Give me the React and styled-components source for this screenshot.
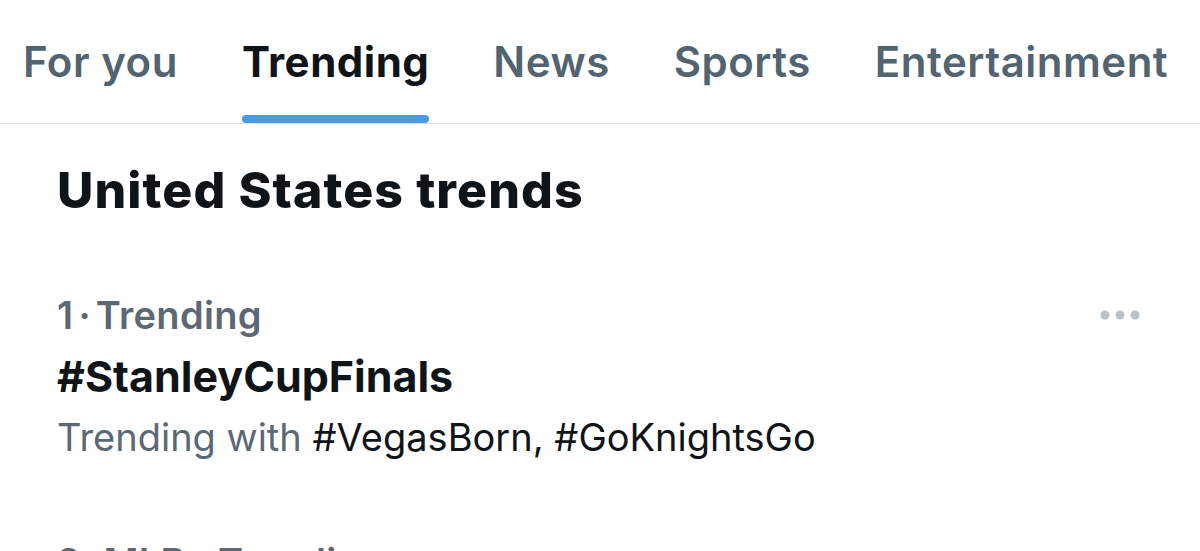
import React from 'react';
import styled, { createGlobalStyle } from 'styled-components';

const GlobalStyle = createGlobalStyle`
  html, body {
    margin: 0;
    padding: 0;
    background: #ffffff;
  }
  body {
    font-family: Inter, "Noto Sans", sans-serif;
    -webkit-font-smoothing: antialiased;
  }
`;

const tabs = ['For you', 'Trending', 'News', 'Sports', 'Entertainment'];

const trends = [
  {
    rank: 1,
    context: 'Trending',
    name: '#StanleyCupFinals',
    with: ['#VegasBorn', '#GoKnightsGo'],
  },
  {
    rank: 2,
    context: 'MLB · Trending',
    name: '#Yankees',
    with: [],
  },
];

function MoreIcon() {
  return (
    <svg width='40' height='10' viewBox='0 0 40 10' aria-hidden='true'>
      <circle cx='5' cy='5' r='4.5' fill='#b9c1c9' />
      <circle cx='20' cy='5' r='4.5' fill='#b9c1c9' />
      <circle cx='35' cy='5' r='4.5' fill='#b9c1c9' />
    </svg>
  );
}

function App() {
  return (
    <Page>
      <GlobalStyle />
      <TabBar>
        {tabs.map((tab) => (
          <Tab key={tab}>
            <TabLabel $active={tab === 'Trending'}>{tab}</TabLabel>
            <Indicator $active={tab === 'Trending'} />
          </Tab>
        ))}
      </TabBar>
      <Section>
        <Heading>United States trends</Heading>
        {trends.map((trend) => (
          <TrendRow key={trend.name}>
            <TrendBody>
              <Meta>
                {trend.rank}<Dot>·</Dot>{trend.context}
              </Meta>
              <TrendName>{trend.name}</TrendName>
              {trend.with.length > 0 && (
                <With>
                  Trending with <Tags>{trend.with.join(', ')}</Tags>
                </With>
              )}
            </TrendBody>
            <More type='button' aria-label='More'>
              <MoreIcon />
            </More>
          </TrendRow>
        ))}
      </Section>
    </Page>
  );
}

export default App;

const Page = styled.div`
  width: 1200px;
  height: 551px;
  overflow: hidden;
  background: #fff;
`;

const TabBar = styled.nav`
  display: flex;
  align-items: flex-end;
  height: 123px;
  padding-left: 23px;
  gap: 64px;
  border-bottom: 1px solid #dadfe3;
  white-space: nowrap;
`;

const Tab = styled.div`
  display: flex;
  flex-direction: column;
  align-items: stretch;
`;

const TabLabel = styled.span`
  font-size: 42px;
  line-height: 50px;
  font-weight: ${({ $active }) => ($active ? 700 : 600)};
  color: ${({ $active }) => ($active ? '#0f1419' : '#536471')};
  letter-spacing: 0.5px;
`;

const Indicator = styled.span`
  display: block;
  height: 8px;
  margin-top: 28px;
  border-radius: 4px;
  background: ${({ $active }) => ($active ? '#4a9ae9' : 'transparent')};
`;

const Section = styled.section`
  padding: 36px 0 0 57px;
`;

const Heading = styled.h2`
  margin: 0;
  font-size: 50px;
  line-height: 60px;
  font-weight: 800;
  color: #0f1419;
  letter-spacing: 1.1px;
`;

const TrendRow = styled.div`
  display: flex;
  align-items: flex-start;
  justify-content: space-between;
  padding: 65px 60px 0 0;
`;

const TrendBody = styled.div`
  display: flex;
  flex-direction: column;
`;

const Meta = styled.span`
  font-size: 38px;
  line-height: 60px;
  font-weight: 600;
  color: #5b6875;
  letter-spacing: 0.3px;
`;

const Dot = styled.span`
  margin: 0 5px;
`;

const TrendName = styled.span`
  font-size: 43px;
  line-height: 62px;
  font-weight: 700;
  color: #0f1419;
`;

const With = styled.span`
  font-size: 38px;
  line-height: 60px;
  font-weight: 400;
  color: #5b6875;
`;

const Tags = styled.span`
  color: #0f1419;
`;

const More = styled.button`
  display: flex;
  align-items: center;
  justify-content: center;
  height: 60px;
  padding: 0;
  border: 0;
  background: transparent;
`;
